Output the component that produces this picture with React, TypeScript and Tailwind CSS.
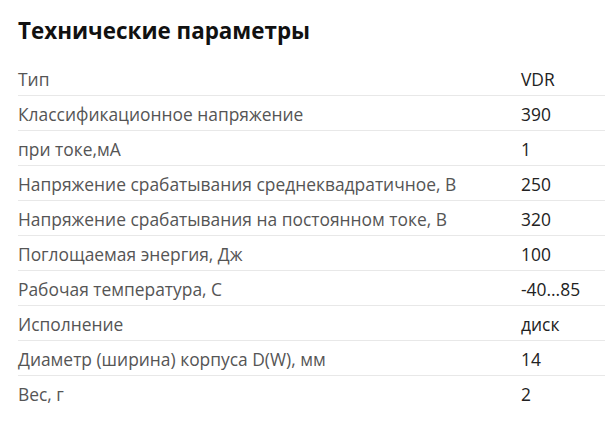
import React from "react";

const rows: [string, string][] = [
  ["Тип", "VDR"],
  ["Классификационное напряжение", "390"],
  ["при токе,мА", "1"],
  ["Напряжение срабатывания среднеквадратичное, В", "250"],
  ["Напряжение срабатывания на постоянном токе, В", "320"],
  ["Поглощаемая энергия, Дж", "100"],
  ["Рабочая температура, С", "-40...85"],
  ["Исполнение", "диск"],
  ["Диаметр (ширина) корпуса D(W), мм", "14"],
  ["Вес, г", "2"],
];

export default function App() {
  return (
    <div
      className="w-[605px] h-[423px] bg-white overflow-hidden pl-[18px]"
      style={{ fontFamily: '"Open Sans", sans-serif' }}
    >
      <h2 className="pt-[16px] h-[61px] text-[22.4px] font-bold leading-[30px] text-[#111]">
        Технические параметры
      </h2>
      <div className="flex flex-col">
        {rows.map(([k, v], i) => (
          <div
            key={i}
            className={`flex h-[35px] items-center pt-[2px] text-[17.4px] ${
              i < rows.length - 1 ? "border-b border-[#e8e8e8]" : ""
            }`}
          >
            <div className="w-[503px] text-[#555]">{k}</div>
            <div className="text-[#222]">{v}</div>
          </div>
        ))}
      </div>
    </div>
  );
}
